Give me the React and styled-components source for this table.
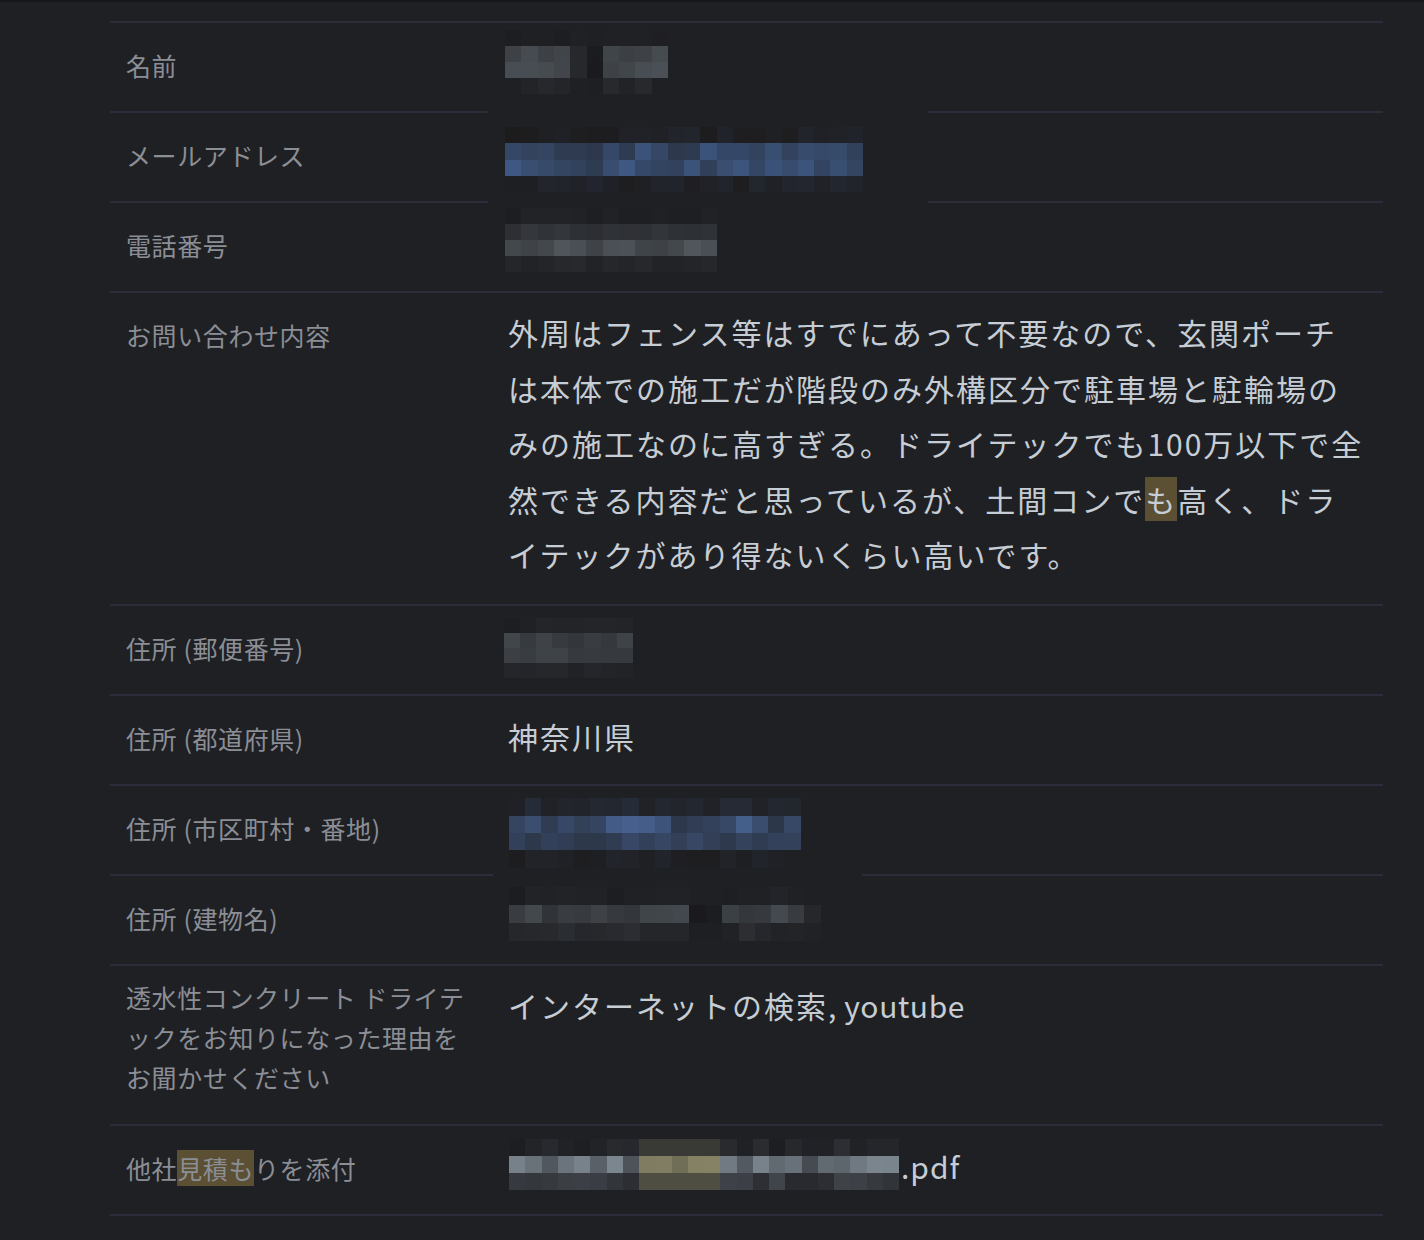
import React from 'react';
import styled, { createGlobalStyle } from 'styled-components';

const BG = [31, 32, 36];
const GRAY = [92, 100, 106];

const GlobalStyle = createGlobalStyle`
  html, body { margin: 0; padding: 0; background: #1f2024; }
  body { font-family: "Noto Sans CJK JP", "Noto Sans", sans-serif; min-height: 1240px; }
`;

const Page = styled.div`
  min-height: 1240px;
  box-sizing: border-box;
  border-top: 2px solid #16171a;
  padding: 19px 41px 24px 110px;
`;

const Table = styled.div`
  display: flex;
  flex-direction: column;
  border-top: 2px solid #2b2d3a;
`;

const Row = styled.div`
  position: relative;
  display: grid;
  grid-template-columns: 382px 1fr;
  min-height: 88px;
  border-bottom: 2px solid #2b2d3a;
`;

const Label = styled.div`
  align-self: ${(p) => (p.$pt != null ? 'start' : 'center')};
  padding: ${(p) => p.$pt ?? 0}px 16px ${(p) => p.$pb ?? 4}px;
  font-size: 25px;
  line-height: 40px;
  letter-spacing: 0.6px;
  color: #8b8e95;
  white-space: nowrap;
`;

const Value = styled.div`
  position: relative;
  align-self: ${(p) => (p.$pt != null ? 'start' : 'center')};
  display: flex;
  align-items: center;
  padding: ${(p) => p.$pt ?? 0}px 16px ${(p) => p.$pb ?? 0}px;
  font-size: 30px;
  line-height: 55.5px;
  letter-spacing: 2px;
  color: #c6cdd4;
  white-space: nowrap;
`;

const Text = styled.div`
  margin-bottom: ${(p) => p.$lift ?? 0}px;
`;

const Latin = styled.span`
  letter-spacing: 0.6px;
`;

const Mark = styled.span`
  background: #5b4f34;
`;

const Suffix = styled.span`
  margin-left: 2px;
  letter-spacing: 1px;
  margin-bottom: 6px;
`;

const Cover = styled.div`
  position: absolute;
  background: #1f2024;
  left: ${(p) => p.$l}px;
  top: ${(p) => p.$t}px;
  width: ${(p) => p.$w}px;
  height: ${(p) => p.$h}px;
`;

const MosaicSvg = styled.svg`
  display: block;
  flex: none;
  margin-left: ${(p) => p.$dx}px;
  margin-top: ${(p) => (p.$dy > 0 ? p.$dy * 2 : 0)}px;
  margin-bottom: ${(p) => (p.$dy < 0 ? -p.$dy * 2 : 0)}px;
`;

function rng(seed) {
  let s = seed % 2147483647;
  if (s <= 0) s += 2147483646;
  return () => {
    s = (s * 16807) % 2147483647;
    return (s - 1) / 2147483646;
  };
}

const mix = (a, b, t) => a.map((v, i) => Math.max(0, Math.min(255, Math.round(v + (b[i] - v) * t))));

function Mosaic({ spec }) {
  const { cols, cw, ch, rows, tint, seed, dx, dy, mask, tintAt } = spec;
  const r = rng(seed);
  const rects = [];
  rows.forEach(([lo, hi], ri) => {
    for (let c = 0; c < cols; c++) {
      const t = lo + (hi - lo) * r();
      const m = mask ? mask(ri, c) : 1;
      const tt = tintAt ? tintAt(ri, c) || tint : tint;
      const [R, G, B] = mix(BG, tt, typeof m === 'number' ? t * m : m(t));
      rects.push(
        <rect
          key={`${ri}-${c}`}
          x={c * cw}
          y={ri * ch}
          width={cw + 0.5}
          height={ch + 0.5}
          fill={`rgb(${R},${G},${B})`}
        />
      );
    }
  });
  return (
    <MosaicSvg
      $dx={dx}
      $dy={dy}
      width={cols * cw}
      height={rows.length * ch}
      viewBox={`0 0 ${cols * cw} ${rows.length * ch}`}
      shapeRendering="crispEdges"
    >
      {rects}
    </MosaicSvg>
  );
}

const OLIVE = [150, 146, 112];

const SPECS = {
  name: {
    cols: 10, cw: 16.3, ch: 16, seed: 11, dx: -3, dy: -5, tint: GRAY,
    rows: [[-0.03, 0.05], [0.45, 0.7], [0.5, 0.78], [0.0, 0.14]],
    mask: (r, c) => (c === 4 ? 0.2 : c === 5 ? -0.1 : 1),
  },
  email: {
    cols: 22, cw: 16.27, ch: 16.25, seed: 23, dx: -3, dy: 2.5, tint: [68, 98, 146],
    rows: [[-0.06, 0.08], [0.35, 0.8], [0.4, 0.85], [-0.03, 0.1]],
  },
  phone: {
    cols: 13, cw: 16.3, ch: 16, seed: 37, dx: -3, dy: -7, tint: GRAY,
    rows: [[-0.03, 0.05], [0.18, 0.35], [0.45, 0.8], [0.03, 0.14]],
  },
  zip: {
    cols: 8, cw: 16.1, ch: 15, seed: 41, dx: -4, dy: -2, tint: GRAY,
    rows: [[-0.03, 0.08], [0.3, 0.6], [0.35, 0.58], [0.02, 0.12]],
  },
  city: {
    cols: 18, cw: 16.2, ch: 17.5, seed: 53, dx: 1, dy: 3, tint: [76, 106, 158],
    rows: [[0.02, 0.16], [0.3, 0.9], [0.3, 0.55], [-0.04, 0.06]],
  },
  building: {
    cols: 19, cw: 16.4, ch: 18, seed: 67, dx: 1, dy: -6, tint: GRAY,
    rows: [[-0.05, 0.07], [0.28, 0.6], [0.03, 0.22]],
    mask: (r, c) => (c === 11 || c === 12 ? -0.15 : c === 18 ? 0.2 : 1),
  },
  pdf: {
    cols: 24, cw: 16.25, ch: 17, seed: 79, dx: 1, dy: -5.5, tint: [140, 152, 162],
    rows: [[-0.02, 0.12], [0.3, 0.9], [0.08, 0.32]],
    tintAt: (r, c) => (c >= 8 && c <= 12 ? OLIVE : null),
    mask: (r, c) =>
      c >= 8 && c <= 12
        ? r === 0
          ? () => 0.22
          : r === 1
          ? (t) => 0.55 + t * 0.35
          : () => 0.4
        : 1,
  },
};

export default function App() {
  return (
    <>
      <GlobalStyle />
      <Page>
        <Table>
          <Row>
            <Label>名前</Label>
            <Value>
              <Mosaic spec={SPECS.name} />
            </Value>
          </Row>
          <Row>
            <Cover $l={378} $t={-7} $w={440} $h={101} />
            <Label>メールアドレス</Label>
            <Value>
              <Mosaic spec={SPECS.email} />
            </Value>
          </Row>
          <Row>
            <Label>電話番号</Label>
            <Value>
              <Mosaic spec={SPECS.phone} />
            </Value>
          </Row>
          <Row>
            <Label $pt={22} $pb={0}>お問い合わせ内容</Label>
            <Value $pt={12} $pb={21.5}>
              <Text>
                外周はフェンス等はすでにあって不要なので、玄関ポーチ
                <br />
                は本体での施工だが階段のみ外構区分で駐車場と駐輪場の
                <br />
                みの施工なのに高すぎる。ドライテックでも100万以下で全
                <br />
                然できる内容だと思っているが、土間コンで<Mark>も</Mark>高く、ドラ
                <br />
                イテックがあり得ないくらい高いです。
              </Text>
            </Value>
          </Row>
          <Row>
            <Label>住所 (郵便番号)</Label>
            <Value>
              <Mosaic spec={SPECS.zip} />
            </Value>
          </Row>
          <Row>
            <Label>住所 (都道府県)</Label>
            <Value>
              <Text $lift={6}>神奈川県</Text>
            </Value>
          </Row>
          <Row>
            <Cover $l={383} $t={81} $w={369} $h={10} />
            <Label>住所 (市区町村・番地)</Label>
            <Value>
              <Mosaic spec={SPECS.city} />
            </Value>
          </Row>
          <Row>
            <Label>住所 (建物名)</Label>
            <Value>
              <Mosaic spec={SPECS.building} />
            </Value>
          </Row>
          <Row>
            <Label $pt={11} $pb={27}>
              透水性コンクリート ドライテ
              <br />
              ックをお知りになった理由を
              <br />
              お聞かせください
            </Label>
            <Value $pt={12}>
              <Text>
                インターネットの検索<Latin>, youtube</Latin>
              </Text>
            </Value>
          </Row>
          <Row>
            <Label>
              他社<Mark>見積も</Mark>りを添付
            </Label>
            <Value>
              <Mosaic spec={SPECS.pdf} />
              <Suffix>.pdf</Suffix>
            </Value>
          </Row>
        </Table>
      </Page>
    </>
  );
}
